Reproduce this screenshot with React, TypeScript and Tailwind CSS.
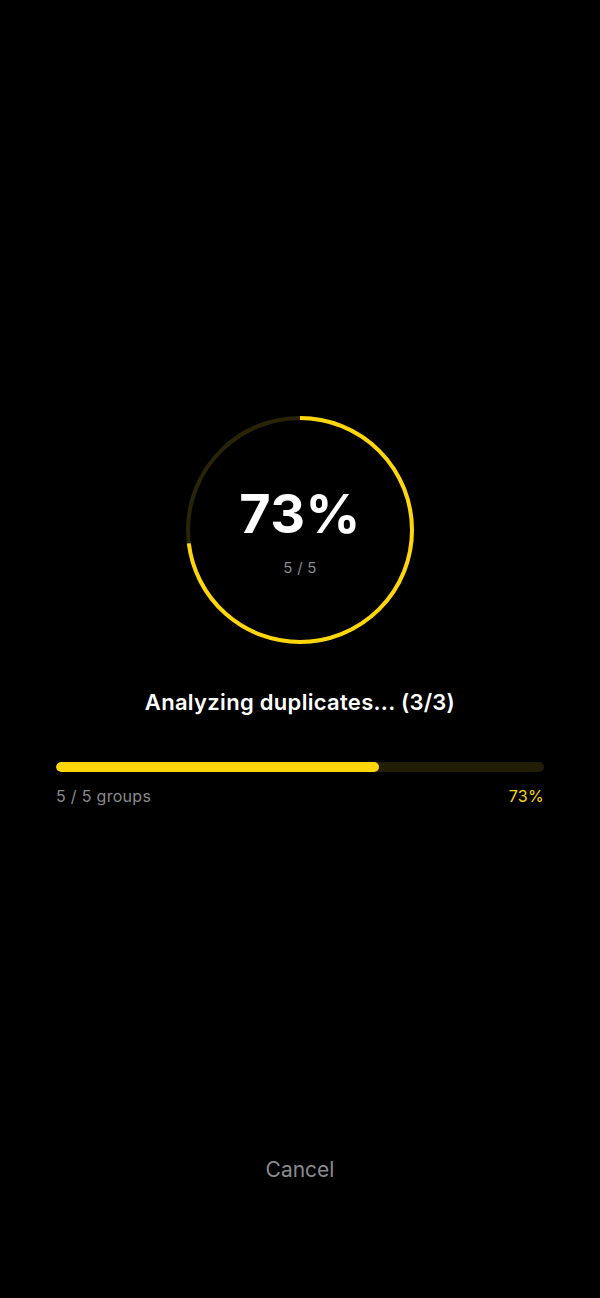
const YELLOW = "#FFD60A";

const ProgressRing = ({ percent }: { percent: number }) => {
  const r = 112;
  const c = 2 * Math.PI * r;
  return (
    <div className="relative w-[232px] h-[232px]">
      <svg width="232" height="232" viewBox="0 0 232 232" className="-rotate-90">
        <circle cx="116" cy="116" r={r} fill="none" stroke="#2a2406" strokeWidth="4" />
        <circle
          cx="116"
          cy="116"
          r={r}
          fill="none"
          stroke={YELLOW}
          strokeWidth="4"
          strokeDasharray={c}
          strokeDashoffset={c * (1 - percent / 100)}
        />
      </svg>
      <div className="absolute inset-0 flex flex-col items-center justify-center pt-[2px]">
        <span className="text-[54px] leading-none font-bold text-white tracking-[0.5px]">{percent}%</span>
        <span className="mt-[19px] text-[15px] leading-none text-[#8a8a8e] tracking-[0.3px]">5 / 5</span>
      </div>
    </div>
  );
};

export default function App() {
  const percent = 73;
  const barWidth = 66.2;
  return (
    <div
      className="bg-black w-full h-[1298px] flex flex-col items-center"
      style={{ fontFamily: "Inter, 'Liberation Sans', sans-serif" }}
    >
      <div className="pt-[414px]">
        <ProgressRing percent={percent} />
      </div>
      <h1 className="mt-[45px] text-[22px] leading-none font-semibold text-white tracking-[0.3px]">
        Analyzing duplicates... (3/3)
      </h1>
      <div className="mt-[49px] w-full px-[56px]">
        <div className="h-[10px] w-full rounded-full bg-[#221e05] overflow-hidden">
          <div className="h-full rounded-full bg-[#FFD60A]" style={{ width: `${barWidth}%` }} />
        </div>
        <div className="mt-[16px] flex justify-between text-[16px] leading-none tracking-[0.3px]">
          <span className="text-[#8a8a8e]">5 / 5 groups</span>
          <span className="text-[#FFD60A]">{percent}%</span>
        </div>
      </div>
      <button className="mt-auto mb-[118px] text-[21px] leading-none text-[#8a8a8e]">Cancel</button>
    </div>
  );
}
